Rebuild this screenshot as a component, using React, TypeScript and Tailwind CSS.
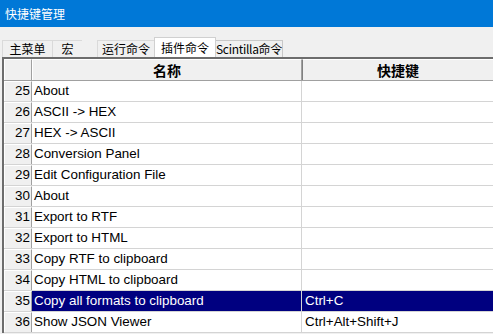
const rows: { n: number; name: string; key: string }[] = [
  { n: 25, name: 'About', key: '' },
  { n: 26, name: 'ASCII -> HEX', key: '' },
  { n: 27, name: 'HEX -> ASCII', key: '' },
  { n: 28, name: 'Conversion Panel', key: '' },
  { n: 29, name: 'Edit Configuration File', key: '' },
  { n: 30, name: 'About', key: '' },
  { n: 31, name: 'Export to RTF', key: '' },
  { n: 32, name: 'Export to HTML', key: '' },
  { n: 33, name: 'Copy RTF to clipboard', key: '' },
  { n: 34, name: 'Copy HTML to clipboard', key: '' },
  { n: 35, name: 'Copy all formats to clipboard', key: 'Ctrl+C' },
  { n: 36, name: 'Show JSON Viewer', key: 'Ctrl+Alt+Shift+J' },
];

const cjk = "font-['Microsoft_YaHei','Noto_Sans_CJK_SC',sans-serif]";

export default function App() {
  return (
    <div className="w-[493px] h-[334px] overflow-hidden bg-[#f0f0f0] font-['Liberation_Sans',Arial,sans-serif]">
      {/* Title bar */}
      <div className={`h-[27px] bg-[#0078d7] text-white text-[12px] pl-[5px] flex items-center ${cjk}`}>
        快捷键管理
      </div>

      {/* Tabs */}
      <div className={`h-[30px] flex items-end pl-[2px] text-[12px] text-black ${cjk}`}>
        <div className="h-[17px] w-[50px] flex items-center justify-center border-t border-l border-[#dadada]">主菜单</div>
        <div className="h-[17px] w-[30px] flex items-center justify-center border-t border-l border-[#dadada]">宏</div>
        <div className="h-[17px] w-[15px]" />
        <div className="h-[17px] w-[57px] flex items-center justify-center border-t border-l border-[#dadada]">运行命令</div>
        <div className="h-[20px] w-[62px] flex items-center justify-center bg-white border-t border-l border-r border-[#d0d0d0]">插件命令</div>
        <div className="h-[17px] w-[67px] flex items-center justify-center border-t border-r border-[#c8c8c8] tracking-[-0.3px]">Scintilla命令</div>
      </div>

      {/* Grid */}
      <div className="ml-[2px] border-t-2 border-l-2 border-[#6d6d6d] bg-white">
        <div className="flex h-[22px] border-b border-[#a0a0a0]">
          <div className="w-[28px] bg-[#f0f0f0] border-r border-[#a0a0a0] border-t border-l border-t-white border-l-white" />
          <div className={`w-[270px] bg-[#f0f0f0] border-r border-[#a0a0a0] border-t border-l border-t-white border-l-white flex items-center justify-center text-[14px] font-bold ${cjk}`}>
            名称
          </div>
          <div className={`flex-1 bg-[#f0f0f0] border-t border-l border-t-white border-l-[#808080] flex items-center justify-center text-[14px] font-bold ${cjk}`}>
            快捷键
          </div>
        </div>
        {rows.map(r => {
          const sel = r.n === 35;
          return (
            <div key={r.n} className="flex h-[21px] border-b border-[#d4d4d4] text-[13.4px]">
              <div className="w-[28px] bg-[#f0f0f0] border-r border-[#a0a0a0] border-t border-l border-t-white border-l-white flex items-center justify-end pr-[1px] text-black">
                {r.n}
              </div>
              <div className={`w-[270px] flex items-center pl-[2px] border-r border-[#d4d4d4] ${sel ? 'bg-[#000080] text-white' : 'text-black'}`}>
                {r.name}
              </div>
              <div className={`flex-1 flex items-center pl-[3px] ${sel ? 'bg-[#000080] text-white' : 'text-black'}`}>
                {r.key}
              </div>
            </div>
          );
        })}
      </div>
    </div>
  );
}
